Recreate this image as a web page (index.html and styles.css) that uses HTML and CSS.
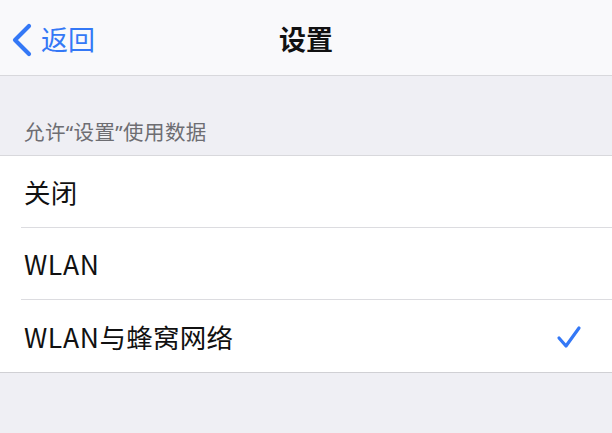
FILE: index.html
```html
<!DOCTYPE html>
<html>
<head>
<meta charset="utf-8">
<link rel="stylesheet" href="styles.css">
</head>
<body>
<div class="page">
  <div class="nav">
    <div class="back">
      <svg class="chev" width="24" height="34" viewBox="0 0 24 34"><path d="M19 3 L5 17 L19 31" fill="none" stroke="#3478f6" stroke-width="4.2" stroke-linecap="round" stroke-linejoin="round"/></svg>
      <span class="back-text">返回</span>
    </div>
    <div class="title">设置</div>
  </div>
  <div class="section-header">允许“设置”使用数据</div>
  <div class="list">
    <div class="row"><span class="label">关闭</span></div>
    <div class="row"><span class="label"><span class="latin">WLAN</span></span></div>
    <div class="row"><span class="label"><span class="latin">WLAN</span>与蜂窝网络</span>
      <svg class="check" width="26" height="24" viewBox="0 0 26 24"><path d="M3 13 L10 21 L23 3" fill="none" stroke="#3478f6" stroke-width="3.2" stroke-linecap="round" stroke-linejoin="round"/></svg>
    </div>
  </div>
</div>
</body>
</html>
```
FILE: styles.css
```css
html, body { margin: 0; padding: 0; }
body {
  width: 612px; height: 433px; overflow: hidden;
  background: #efeff4;
  font-family: "Noto Sans CJK SC", "Noto Sans", sans-serif;
}
.page { width: 612px; }
.nav {
  height: 75px;
  background: #f9f9fb;
  border-bottom: 1px solid #d8d8dc;
  position: relative;
  display: flex;
  align-items: center;
  justify-content: center;
}
.back {
  position: absolute;
  left: 10px; top: 0; height: 75px;
  display: flex; align-items: center;
  color: #3478f6;
}
.chev { margin-top: 4px; }
.back-text { font-size: 27px; margin-left: 7px; margin-top: 2px; }
.title { font-size: 27px; font-weight: 700; color: #111; margin-top: 2px; }
.section-header {
  height: 80px;
  box-sizing: border-box;
  padding: 44px 0 0 24px;
  font-family: "Noto Sans", "Noto Sans CJK SC", sans-serif;
  font-size: 20.5px;
  letter-spacing: 0.4px;
  color: #6d6d72;
  line-height: 24px;
  border-bottom: 1px solid #d8d8dc;
}
.list { background: #fff; border-bottom: 1px solid #d0d0d4; }
.row {
  height: 71px;
  margin-left: 21px;
  padding-left: 3px;
  padding-right: 30px;
  display: flex; align-items: center; justify-content: space-between;
  border-bottom: 1px solid #dcdce0;
}
.row:last-child { border-bottom: none; height: 72px; }
.label { font-size: 26.5px; color: #111; letter-spacing: 0.3px; }
.latin { letter-spacing: 0.6px; }
.check { margin-top: 2px; }
```
